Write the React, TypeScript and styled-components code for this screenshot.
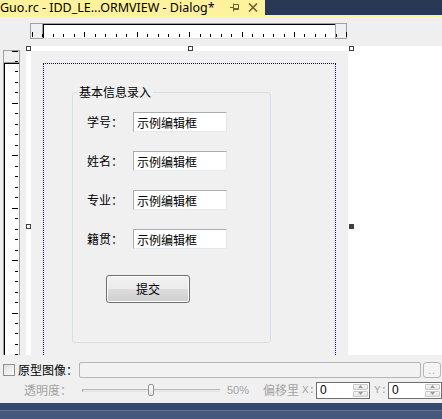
import styled, { createGlobalStyle } from 'styled-components';

const GlobalStyle = createGlobalStyle`
  html, body {
    margin: 0;
    padding: 0;
  }
  body {
    width: 442px;
    height: 419px;
    overflow: hidden;
    background: #efefef;
    font-family: "Noto Sans CJK SC", "Noto Sans", sans-serif;
    color: #000;
  }
  * {
    box-sizing: border-box;
  }
`;

const colors = {
  tabYellow: '#fff29d',
  navy: '#293955',
  panel: '#f0f0f0',
  rulerBorder: '#a0a0a0',
  guide: '#0000d8',
  groupBorder: '#d5dfe5',
  disabled: '#a3a3a3',
  handle: '#404040',
};

const Styled = {
  Frame: styled.div`
    width: 442px;
    height: 419px;
    display: flex;
    flex-direction: column;
  `,
  TabStrip: styled.div`
    height: 15px;
    display: flex;
    background: ${colors.navy};
  `,
  Tab: styled.div`
    width: 265px;
    display: flex;
    align-items: center;
    background: ${colors.tabYellow};
    overflow: hidden;
  `,
  TabTitle: styled.span`
    font-family: "Noto Sans", sans-serif;
    font-size: 12.5px;
    line-height: 15px;
    white-space: nowrap;
  `,
  TabIcons: styled.div`
    margin-left: auto;
    display: flex;
    align-items: center;
    gap: 8px;
    padding-right: 7px;
  `,
  TabAccent: styled.div`
    height: 2px;
    background: ${colors.tabYellow};
  `,
  RulerRow: styled.div`
    height: 28px;
    padding: 6px 0 0 30px;
  `,
  HRuler: styled.div`
    position: relative;
    width: 317px;
    height: 16px;
    display: flex;
  `,
  RulerCap: styled.div<{ $w: number }>`
    width: ${(p) => p.$w}px;
    flex-shrink: 0;
    border: 1px solid ${colors.rulerBorder};
    background: ${colors.panel};
  `,
  HRulerBody: styled.div`
    flex: 1;
    background: #fff;
    border-top: 1px solid ${colors.rulerBorder};
    border-bottom: 1px solid #e0e0e0;
    box-shadow: inset 1px 1px 0 #000;
  `,
  Ticks: styled.svg`
    position: absolute;
    left: 0;
    top: 0;
    pointer-events: none;
  `,
  Workspace: styled.div`
    height: 310px;
    display: flex;
    overflow: hidden;
  `,
  Gutter: styled.div`
    width: 26px;
    flex-shrink: 0;
    padding: 5px 0 0 3px;
  `,
  VRuler: styled.div`
    position: relative;
    width: 17px;
    height: 320px;
    display: flex;
    flex-direction: column;
  `,
  VRulerCap: styled.div`
    height: 13px;
    border: 1px solid ${colors.rulerBorder};
    background: ${colors.panel};
  `,
  VRulerBody: styled.div`
    flex: 1;
    background: #fff;
    border-left: 1px solid ${colors.rulerBorder};
    border-right: 1px solid ${colors.rulerBorder};
    box-shadow: inset 1px 1px 0 #000;
  `,
  Canvas: styled.div`
    position: relative;
    flex: 1;
    margin-top: 1px;
    padding: 5px 0 0 5px;
    background: #fff;
    overflow: hidden;
  `,
  Handle: styled.div<{ $x: number; $y: number; $filled?: boolean }>`
    position: absolute;
    left: ${(p) => p.$x}px;
    top: ${(p) => p.$y}px;
    width: 5px;
    height: 5px;
    border: 1px solid ${colors.handle};
    background: ${(p) => (p.$filled ? colors.handle : '#fff')};
  `,
  Dialog: styled.div`
    width: 317px;
    height: 330px;
    padding: 12px 12px 0;
    background: ${colors.panel};
  `,
  Guide: styled.div`
    height: 100%;
    border: 1px dotted ${colors.guide};
    border-bottom: none;
  `,
  GroupBox: styled.fieldset`
    width: 199px;
    height: 258px;
    margin: 21px 0 0 28px;
    padding: 0;
    min-inline-size: 0;
    border: 1px solid ${colors.groupBorder};
    border-radius: 3px;
  `,
  Legend: styled.legend`
    margin-left: 4px;
    padding: 0 2px;
    font-size: 12px;
    line-height: 14px;
  `,
  Form: styled.div`
    display: flex;
    flex-direction: column;
    align-items: flex-start;
    gap: 19px;
    padding: 13px 0 0 14px;
  `,
  FieldRow: styled.div`
    display: flex;
    align-items: center;
    height: 20px;
  `,
  FieldLabel: styled.span`
    width: 46px;
    font-size: 12px;
    line-height: 14px;
  `,
  EditBox: styled.div`
    width: 94px;
    height: 20px;
    padding: 3px 0 0 3px;
    background: #fff;
    border: 1px solid;
    border-color: #abadb3 #e3e9ef #e3e9ef #abadb3;
    font-size: 12px;
    line-height: 14px;
  `,
  SubmitButton: styled.button`
    width: 84px;
    height: 28px;
    margin: 7px 0 0 19px;
    padding: 0;
    border: 1px solid #707070;
    border-radius: 3px;
    background: linear-gradient(#f2f2f2 0%, #ebebeb 50%, #dddddd 50%, #cfcfcf 100%);
    box-shadow: inset 0 0 0 1px #fcfcfc;
    font-family: inherit;
    font-size: 12px;
    line-height: 14px;
    color: #000;
  `,
  BottomPanel: styled.div`
    height: 48px;
    padding-top: 7px;
    background: ${colors.panel};
    display: flex;
    flex-direction: column;
    gap: 3px;
  `,
  PanelRow: styled.div<{ $h: number }>`
    height: ${(p) => p.$h}px;
    display: flex;
    align-items: center;
  `,
  Checkbox: styled.div`
    width: 12px;
    height: 12px;
    margin-left: 3px;
    border: 1px solid #8e8f8f;
    background: linear-gradient(135deg, #e0e0e0, #fafafa);
  `,
  PanelLabel: styled.span<{ $w: number; $ml?: number; $disabled?: boolean }>`
    width: ${(p) => p.$w}px;
    margin-left: ${(p) => p.$ml ?? 0}px;
    flex-shrink: 0;
    font-size: 12px;
    line-height: 14px;
    white-space: nowrap;
    color: ${(p) => (p.$disabled ? colors.disabled : '#000')};
  `,
  AxisLabel: styled.span<{ $w: number; $ml?: number }>`
    width: ${(p) => p.$w}px;
    margin-left: ${(p) => p.$ml ?? 0}px;
    flex-shrink: 0;
    font-family: "Liberation Mono", monospace;
    font-size: 11px;
    color: ${colors.disabled};
  `,
  PathInput: styled.div`
    width: 342px;
    height: 16px;
    flex-shrink: 0;
    border: 1px solid #b6b6b6;
    border-radius: 2px;
    background: #f2f2f2;
  `,
  BrowseButton: styled.div`
    width: 18px;
    height: 16px;
    margin-left: 2px;
    flex-shrink: 0;
    border: 1px solid #b6b6b6;
    border-radius: 3px;
    background: #f4f4f4;
    color: ${colors.disabled};
    font-family: "Liberation Sans", sans-serif;
    font-size: 10px;
    line-height: 16px;
    text-align: center;
    letter-spacing: 1px;
  `,
  Slider: styled.div`
    position: relative;
    width: 138px;
    height: 16px;
    flex-shrink: 0;
    display: flex;
    align-items: center;
  `,
  SliderTrack: styled.div`
    flex: 1;
    height: 3px;
    border-top: 1px solid #b9b9b9;
    border-bottom: 1px solid #e3e3e3;
    background: #e9e9e9;
    border-left: 1px solid #9a9a9a;
  `,
  SliderThumb: styled.div`
    position: absolute;
    top: 2px;
    width: 6px;
    height: 12px;
    border: 1px solid #959595;
    border-radius: 2px;
    background: linear-gradient(#ffffff, #e2e2e2);
  `,
  Percent: styled.span`
    width: 36px;
    margin-left: 7px;
    flex-shrink: 0;
    font-family: "Liberation Sans", sans-serif;
    font-size: 11px;
    color: ${colors.disabled};
  `,
  SpinBox: styled.div<{ $w: number }>`
    width: ${(p) => p.$w}px;
    height: 17px;
    flex-shrink: 0;
    display: flex;
    border: 1px solid #6f6f6f;
    background: #fff;
  `,
  SpinValue: styled.span`
    flex: 1;
    padding-left: 3px;
    font-family: "Liberation Sans", sans-serif;
    font-size: 12px;
    line-height: 15px;
  `,
  SpinButtons: styled.div`
    width: 16px;
    display: flex;
    flex-direction: column;
    gap: 1px;
    padding: 1px 1px 1px 0;
  `,
  SpinButton: styled.div`
    flex: 1;
    border: 1px solid #c9c9c9;
    border-radius: 1px;
    background: linear-gradient(#f6f6f6, #e4e4e4);
    display: flex;
    align-items: center;
    justify-content: center;
  `,
  Footer: styled.div`
    flex: 1;
    background: linear-gradient(#354a6d 0, #354a6d 7px, #62769a 7px, #62769a 8px, #46597c 8px);
  `,
};

const range = (n: number) => Array.from({ length: n }, (_, i) => i);

const HTicks = () => (
  <Styled.Ticks width={317} height={16}>
    {range(31).map((i) => {
      const x = Math.round(2 + 10.48 * i) + 0.5;
      const long = i % 5 === 0;
      return <line key={i} x1={x} x2={x} y1={long ? 9 : 11} y2={14} stroke="#000" />;
    })}
  </Styled.Ticks>
);

const VTicks = () => (
  <Styled.Ticks width={17} height={320}>
    {range(30).map((i) => {
      const y = Math.round(0.5 + 10.48 * i) + 0.5;
      const long = i % 5 === 0;
      return <line key={i} x1={long ? 9 : 12} x2={15} y1={y} y2={y} stroke="#000" />;
    })}
  </Styled.Ticks>
);

const PinIcon = () => (
  <svg width="10" height="9" viewBox="0 0 10 9">
    <g stroke="#6e5f32" fill="none">
      <path d="M0 4.5h3" />
      <path d="M3.5 0.5v8" />
      <path d="M3.5 1.5h5v5h-5" />
      <path d="M3.5 5.5h5" />
    </g>
  </svg>
);

const CloseIcon = () => (
  <svg width="10" height="9" viewBox="0 0 10 9">
    <path d="M1 0.5l8 8M9 0.5l-8 8" stroke="#6e5f32" strokeWidth="1.6" />
  </svg>
);

const SpinArrow = ({ up }: { up?: boolean }) => (
  <svg width="5" height="3" viewBox="0 0 5 3">
    <path d={up ? 'M0 3L2.5 0L5 3Z' : 'M0 0L2.5 3L5 0Z'} fill="#9a9a9a" />
  </svg>
);

const SpinBox = ({ width, value }: { width: number; value: string }) => (
  <Styled.SpinBox $w={width}>
    <Styled.SpinValue>{value}</Styled.SpinValue>
    <Styled.SpinButtons>
      <Styled.SpinButton>
        <SpinArrow up />
      </Styled.SpinButton>
      <Styled.SpinButton>
        <SpinArrow />
      </Styled.SpinButton>
    </Styled.SpinButtons>
  </Styled.SpinBox>
);

const fields = ['学号：', '姓名：', '专业：', '籍贯：'];
const opacity = 50;

export const App = () => (
  <>
    <GlobalStyle />
    <Styled.Frame>
      <Styled.TabStrip>
        <Styled.Tab>
          <Styled.TabTitle>Guo.rc - IDD_LE...ORMVIEW - Dialog*</Styled.TabTitle>
          <Styled.TabIcons>
            <PinIcon />
            <CloseIcon />
          </Styled.TabIcons>
        </Styled.Tab>
      </Styled.TabStrip>
      <Styled.TabAccent />

      <Styled.RulerRow>
        <Styled.HRuler>
          <Styled.RulerCap $w={13} />
          <Styled.HRulerBody />
          <Styled.RulerCap $w={12} />
          <HTicks />
        </Styled.HRuler>
      </Styled.RulerRow>

      <Styled.Workspace>
        <Styled.Gutter>
          <Styled.VRuler>
            <Styled.VRulerCap />
            <Styled.VRulerBody />
            <VTicks />
          </Styled.VRuler>
        </Styled.Gutter>
        <Styled.Canvas>
          <Styled.Dialog>
            <Styled.Guide>
              <Styled.GroupBox>
                <Styled.Legend>基本信息录入</Styled.Legend>
                <Styled.Form>
                  {fields.map((label) => (
                    <Styled.FieldRow key={label}>
                      <Styled.FieldLabel>{label}</Styled.FieldLabel>
                      <Styled.EditBox>示例编辑框</Styled.EditBox>
                    </Styled.FieldRow>
                  ))}
                  <Styled.SubmitButton type="button">提交</Styled.SubmitButton>
                </Styled.Form>
              </Styled.GroupBox>
            </Styled.Guide>
          </Styled.Dialog>
          <Styled.Handle $x={0} $y={0} />
          <Styled.Handle $x={162} $y={0} />
          <Styled.Handle $x={323} $y={0} />
          <Styled.Handle $x={0} $y={178} />
          <Styled.Handle $x={323} $y={178} $filled />
        </Styled.Canvas>
      </Styled.Workspace>

      <Styled.BottomPanel>
        <Styled.PanelRow $h={16}>
          <Styled.Checkbox />
          <Styled.PanelLabel $w={61} $ml={3}>原型图像：</Styled.PanelLabel>
          <Styled.PathInput />
          <Styled.BrowseButton>..</Styled.BrowseButton>
        </Styled.PanelRow>
        <Styled.PanelRow $h={18}>
          <Styled.PanelLabel $w={58} $ml={24} $disabled>
            透明度：
          </Styled.PanelLabel>
          <Styled.Slider>
            <Styled.SliderTrack />
            <Styled.SliderThumb style={{ left: `${(opacity / 100) * (138 - 6)}px` }} />
          </Styled.Slider>
          <Styled.Percent>{opacity}%</Styled.Percent>
          <Styled.PanelLabel $w={39} $disabled>
            偏移里
          </Styled.PanelLabel>
          <Styled.AxisLabel $w={14}>X:</Styled.AxisLabel>
          <SpinBox width={54} value="0" />
          <Styled.AxisLabel $w={14} $ml={4}>Y:</Styled.AxisLabel>
          <SpinBox width={54} value="0" />
        </Styled.PanelRow>
      </Styled.BottomPanel>
      <Styled.Footer />
    </Styled.Frame>
  </>
);

export default App;
